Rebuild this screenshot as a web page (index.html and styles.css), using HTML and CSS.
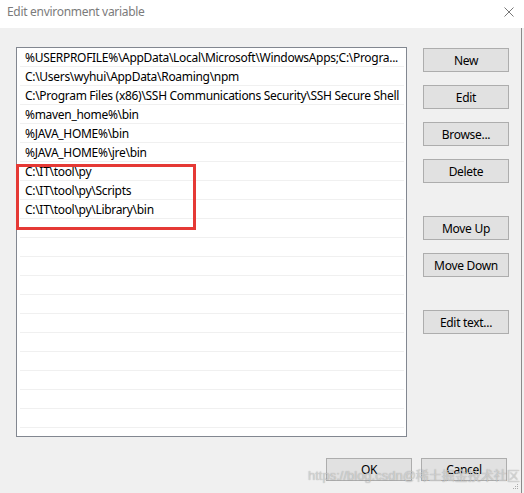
FILE: index.html
```html
<!doctype html>
<html>
<head>
	<title>Edit environment variable</title>
	<meta charset="utf-8" />
	<link rel="stylesheet" href="styles.css">
</head>

<body>
	<div id="window">
		<div id="titlebar">
			<span class="title">Edit environment variable</span>
			<svg class="close" width="10" height="10" viewBox="0 0 10 10">
				<path d="M0.5 0.5 L9.5 9.5 M9.5 0.5 L0.5 9.5" stroke="#777" stroke-width="1" fill="none" />
			</svg>
		</div>

		<div id="content">
			<div id="main">
				<div id="pathlist">
					<div class="row">%USERPROFILE%\AppData\Local\Microsoft\WindowsApps;C:\Progra...</div>
					<div class="row">C:\Users\wyhui\AppData\Roaming\npm</div>
					<div class="row">C:\Program Files (x86)\SSH Communications Security\SSH Secure Shell</div>
					<div class="row">%maven_home%\bin</div>
					<div class="row">%JAVA_HOME%\bin</div>
					<div class="row">%JAVA_HOME%\jre\bin</div>
					<div class="row">C:\IT\tool\py</div>
					<div class="row">C:\IT\tool\py\Scripts</div>
					<div class="row">C:\IT\tool\py\Library\bin</div>
					<div class="row"></div>
					<div class="row"></div>
					<div class="row"></div>
					<div class="row"></div>
					<div class="row"></div>
					<div class="row"></div>
					<div class="row"></div>
					<div class="row"></div>
					<div class="row"></div>
					<div class="row"></div>
					<div class="row"></div>

					<!-- red box drawn over the python entries -->
					<div id="highlight"></div>
				</div>

				<div id="sidebar">
					<button type="button" class="btn">New</button>
					<button type="button" class="btn">Edit</button>
					<button type="button" class="btn">Browse...</button>
					<button type="button" class="btn">Delete</button>
					<button type="button" class="btn group">Move Up</button>
					<button type="button" class="btn">Move Down</button>
					<button type="button" class="btn group">Edit text...</button>
				</div>
			</div>

			<div id="footer">
				<button type="button" class="btn small">OK</button>
				<button type="button" class="btn small">Cancel</button>
			</div>

			<div id="watermark">https://blog.csdn@稀土掘金技术社区</div>

			<svg id="grip" width="6" height="6" viewBox="0 0 6 6">
				<rect x="4" y="0" width="1" height="1" fill="#aaa" />
				<rect x="2" y="2" width="1" height="1" fill="#aaa" />
				<rect x="4" y="2" width="1" height="1" fill="#aaa" />
				<rect x="0" y="4" width="1" height="1" fill="#aaa" />
				<rect x="2" y="4" width="1" height="1" fill="#aaa" />
				<rect x="4" y="4" width="1" height="1" fill="#aaa" />
			</svg>
		</div>
	</div>
</body>
</html>
```

FILE: styles.css
```css
body {
	margin:0;
	padding:0;
	font-family:"Noto Sans", "Open Sans", sans-serif;
	font-size:12px;
	letter-spacing:-0.3px;
	color:black;
	background-color:#f0f0f0;
}

#window {
	width:524px;
	height:493px;
	overflow:hidden;
}

#titlebar {
	height:28px;
	background-color:white;
	display:flex;
	justify-content:space-between;
	align-items:flex-start;
	padding:0 10px 0 7px;
	box-sizing:border-box;
}

.title {
	color:#7b7b7b;
	line-height:16px;
	padding-top:4px;
}

.close {
	margin-top:7px;
}

#content {
	position:relative;
	width:522px;
	height:465px;
	border-right:1px solid #8a8a8a;
	padding:19px 0 0 16px;
	box-sizing:border-box;
}

#main {
	display:flex;
	gap:16px;
}

#pathlist {
	position:relative;
	width:391px;
	height:390px;
	border:1px solid #828790;
	background-color:white;
	box-sizing:border-box;
}

.row {
	height:19px;
	margin:0 2px 0 3px;
	padding:2px 0 0 5px;
	box-sizing:border-box;
	line-height:16px;
	border-bottom:1px solid #f0f0f0;
	white-space:nowrap;
	overflow:hidden;
}

#highlight {
	position:absolute;
	left:-1px;
	top:116px;
	width:180px;
	height:66px;
	border:3px solid #e53935;
	box-sizing:border-box;
}

#sidebar {
	display:flex;
	flex-direction:column;
	gap:13px;
	padding-top:1px;
}

.btn {
	width:86px;
	height:24px;
	padding:0;
	background-color:#e1e1e1;
	border:1px solid #adadad;
	font-family:"Noto Sans", "Open Sans", sans-serif;
	font-size:12px;
	letter-spacing:-0.3px;
	color:black;
}

.group {
	margin-top:20px;
}

#footer {
	display:flex;
	justify-content:flex-end;
	gap:9px;
	padding:21px 14px 0 0;
}

.small {
	height:23px;
}

#watermark {
	position:absolute;
	left:308px;
	top:437px;
	font-family:"Liberation Sans", "Noto Sans CJK SC", sans-serif;
	font-size:13px;
	letter-spacing:0;
	color:rgba(225,225,225,0.7);
	text-shadow:0 0 1px rgba(0,0,0,0.35);
	white-space:nowrap;
}

#grip {
	position:absolute;
	right:2px;
	bottom:3px;
}
```
